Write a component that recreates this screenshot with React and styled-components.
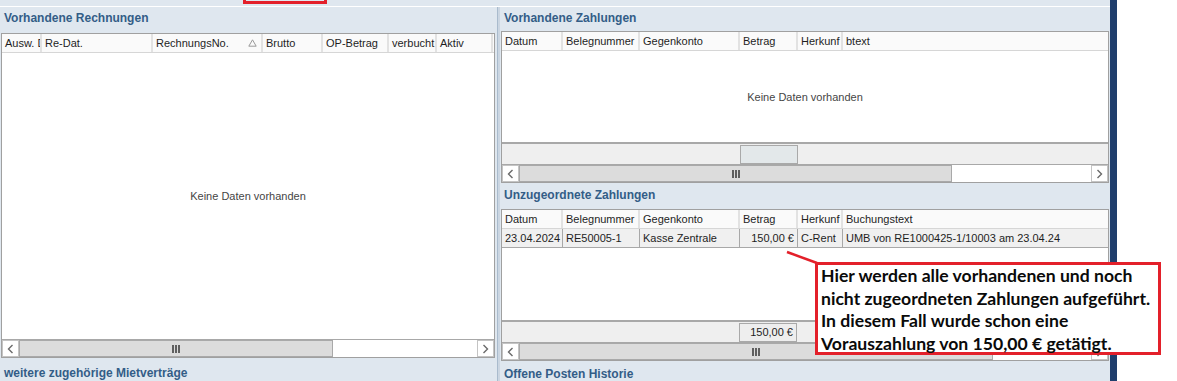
import React from "react";
import styled, { createGlobalStyle } from "styled-components";

const GlobalStyle = createGlobalStyle`
  *, *::before, *::after { box-sizing: border-box; }
  html, body { margin: 0; padding: 0; background: #ffffff; }
`;

const Root = styled.div`
  position: relative;
  width: 1177px;
  height: 381px;
  display: flex;
  overflow: hidden;
  font-family: "Liberation Sans", Arial, sans-serif;
  font-size: 11px;
  color: #1e1e1e;
`;

const Main = styled.div`
  width: 1110px;
  display: flex;
  flex-direction: column;
  background: #dfe7ef;
`;

const DarkBar = styled.div`
  width: 7px;
  background: #1f3e6c;
`;

const Rest = styled.div`
  flex: 1;
  background: #ffffff;
`;

const TopStrip = styled.div`
  height: 7px;
  border-bottom: 1px solid #ffffff;
  flex-shrink: 0;
`;

const Panels = styled.div`
  flex: 1;
  display: flex;
  min-height: 0;
`;

const Panel = styled.div`
  width: ${(p) => p.$w}px;
  display: flex;
  flex-direction: column;
  flex-shrink: 0;
`;

const Splitter = styled.div`
  width: 3px;
  flex-shrink: 0;
  background: linear-gradient(to right, #a9bbcd 0 1px, #cbd6e2 1px 3px);
`;

const PanelTitle = styled.div`
  height: ${(p) => p.$h}px;
  padding: ${(p) => p.$pt}px 0 0 4px;
  font-weight: bold;
  font-size: 12px;
  line-height: 16px;
  color: #335d87;
  white-space: nowrap;
  flex-shrink: 0;
`;

const Grid = styled.div`
  margin-left: 1px;
  width: ${(p) => p.$w}px;
  height: ${(p) => p.$h}px;
  border: 1px solid #a0a0a0;
  background: #ffffff;
  display: flex;
  flex-direction: column;
  flex-shrink: 0;
  overflow: hidden;
`;

const HeaderRow = styled.div`
  display: flex;
  height: 19px;
  flex-shrink: 0;
  background: #fafafa;
  border-bottom: 1px solid #d6d6d6;
`;

const HeaderCell = styled.div`
  width: ${(p) => p.$w}px;
  flex-shrink: 0;
  display: flex;
  align-items: center;
  justify-content: space-between;
  padding: 0 ${(p) => (p.$tight ? 0 : 4)}px 0 3px;
  border-right: ${(p) => (p.$last ? "none" : "2px solid #e2e2e2")};
  line-height: 18px;
  white-space: nowrap;
  overflow: hidden;
  color: #1e1e1e;
  ${(p) => (p.$last ? "flex: 1;" : "")}
`;

const DataRow = styled.div`
  display: flex;
  height: 19px;
  flex-shrink: 0;
  background: #f0f0f0;
  border-bottom: 1px solid #a8a8a8;
`;

const DataCell = styled.div`
  width: ${(p) => p.$w}px;
  flex-shrink: 0;
  padding: 0 3px;
  line-height: 18px;
  white-space: nowrap;
  overflow: hidden;
  text-align: ${(p) => (p.$right ? "right" : "left")};
  border-right: ${(p) => (p.$last ? "none" : "1px solid #a8a8a8")};
  ${(p) => (p.$last ? "flex: 1;" : "")}
`;

const Body = styled.div`
  flex: 1;
  min-height: 0;
  display: flex;
  align-items: center;
  justify-content: center;
  background: #ffffff;
`;

const Empty = styled.span`
  color: #454545;
`;

const Footer = styled.div`
  height: 22px;
  flex-shrink: 0;
  border-top: 2px solid #a8a8a8;
  background: #efefef;
  display: flex;
  align-items: center;
  padding-left: ${(p) => p.$offset}px;
`;

const FooterBox = styled.div`
  width: 58px;
  height: 19px;
  border: 1px solid #a9a9a9;
  background: ${(p) => (p.$filled ? "#eeeeee" : "#e3e8ea")};
  text-align: right;
  padding-right: 3px;
  line-height: 17px;
  white-space: nowrap;
`;

const ScrollBar = styled.div`
  height: 18px;
  flex-shrink: 0;
  display: flex;
  border-top: 1px solid #a8a8a8;
  background: #ffffff;
`;

const ArrowBtn = styled.div`
  width: 17px;
  flex-shrink: 0;
  display: flex;
  align-items: center;
  justify-content: center;
  border: 1px solid #c4c4c4;
  background: #ffffff;
`;

const Thumb = styled.div`
  width: ${(p) => p.$w}px;
  flex-shrink: 0;
  background: #dcdcdc;
  border: 1px solid #a9a9a9;
  display: flex;
  align-items: center;
  justify-content: center;
`;

const Track = styled.div`
  flex: 1;
  background: #ffffff;
`;

const RedFrame = styled.div`
  position: absolute;
  left: 243px;
  top: -20px;
  width: 84px;
  height: 24px;
  border: 3px solid #e3202a;
`;

const Callout = styled.div`
  position: absolute;
  left: 815px;
  top: 262px;
  width: 346px;
  height: 93px;
  border: 3px solid #e3202a;
  background: #ffffff;
  padding: 0 0 0 3px;
  font-family: Lato, "Open Sans", sans-serif;
  font-weight: 700;
  font-size: 17.6px;
  color: #0a0a0a;
`;

const CalloutLine = styled.div`
  line-height: 22.5px;
  white-space: nowrap;
`;

const Connector = styled.svg`
  position: absolute;
  left: 784px;
  top: 248px;
  overflow: visible;
`;

const Chevron = ({ dir }) => (
  <svg width="7" height="10" viewBox="0 0 7 10">
    <polyline
      points={dir === "left" ? "5.5,1 1.5,5 5.5,9" : "1.5,1 5.5,5 1.5,9"}
      fill="none"
      stroke="#6a6a6a"
      strokeWidth="1.4"
    />
  </svg>
);

const Grip = () => (
  <svg width="8" height="8" viewBox="0 0 8 8">
    <rect x="0" y="0" width="2" height="8" fill="#5f5f5f" />
    <rect x="3" y="0" width="2" height="8" fill="#5f5f5f" />
    <rect x="6" y="0" width="2" height="8" fill="#5f5f5f" />
  </svg>
);

const SortMark = () => (
  <svg width="9" height="8" viewBox="0 0 9 8">
    <polygon points="4.5,0.8 8.2,7.2 0.8,7.2" fill="none" stroke="#9a9a9a" strokeWidth="1" />
  </svg>
);

const Scroll = ({ thumb }) => (
  <ScrollBar>
    <ArrowBtn>
      <Chevron dir="left" />
    </ArrowBtn>
    <Thumb $w={thumb}>
      <Grip />
    </Thumb>
    <Track />
    <ArrowBtn>
      <Chevron dir="right" />
    </ArrowBtn>
  </ScrollBar>
);

const leftCols = [
  { label: "Ausw. D", w: 40, tight: true },
  { label: "Re-Dat.", w: 111 },
  { label: "RechnungsNo.", w: 110, sort: true },
  { label: "Brutto", w: 60 },
  { label: "OP-Betrag", w: 66 },
  { label: "verbucht", w: 48, tight: true },
  { label: "Aktiv", w: 56 },
];

const payCols = [
  { label: "Datum", w: 61 },
  { label: "Belegnummer", w: 77 },
  { label: "Gegenkonto", w: 100 },
  { label: "Betrag", w: 58 },
  { label: "Herkunf", w: 45, tight: true },
];

const Header = ({ cols, lastLabel }) => (
  <HeaderRow>
    {cols.map((c) => (
      <HeaderCell key={c.label} $w={c.w} $tight={c.tight}>
        <span>{c.label}</span>
        {c.sort && <SortMark />}
      </HeaderCell>
    ))}
    {lastLabel && (
      <HeaderCell $last>
        <span>{lastLabel}</span>
      </HeaderCell>
    )}
  </HeaderRow>
);

export default function App() {
  return (
    <>
      <GlobalStyle />
      <Root>
        <Main>
          <TopStrip />
          <Panels>
            <Panel $w={497}>
              <PanelTitle $h={26} $pt={3}>Vorhandene Rechnungen</PanelTitle>
              <Grid $w={494} $h={325}>
                <Header cols={leftCols} />
                <Body>
                  <Empty>Keine Daten vorhanden</Empty>
                </Body>
                <Scroll thumb={314} />
              </Grid>
              <PanelTitle $h={23} $pt={7}>weitere zugehörige Mietverträge</PanelTitle>
            </Panel>
            <Splitter />
            <Panel $w={610}>
              <PanelTitle $h={24} $pt={3}>Vorhandene Zahlungen</PanelTitle>
              <Grid $w={608} $h={152}>
                <Header cols={payCols} lastLabel="btext" />
                <Body>
                  <Empty>Keine Daten vorhanden</Empty>
                </Body>
                <Footer $offset={238}>
                  <FooterBox />
                </Footer>
                <Scroll thumb={433} />
              </Grid>
              <PanelTitle $h={26} $pt={4}>Unzugeordnete Zahlungen</PanelTitle>
              <Grid $w={608} $h={152}>
                <Header cols={payCols} lastLabel="Buchungstext" />
                <DataRow>
                  <DataCell $w={61}>23.04.2024</DataCell>
                  <DataCell $w={77}>RE50005-1</DataCell>
                  <DataCell $w={100}>Kasse Zentrale</DataCell>
                  <DataCell $w={58} $right>150,00 €</DataCell>
                  <DataCell $w={45}>C-Rent</DataCell>
                  <DataCell $last>UMB von RE1000425-1/10003 am 23.04.24</DataCell>
                </DataRow>
                <Body />
                <Footer $offset={237}>
                  <FooterBox $filled>150,00 €</FooterBox>
                </Footer>
                <Scroll thumb={474} />
              </Grid>
              <PanelTitle $h={21} $pt={5}>Offene Posten Historie</PanelTitle>
            </Panel>
          </Panels>
        </Main>
        <DarkBar />
        <Rest />

        <RedFrame />
        <Connector width="34" height="16">
          <line x1="3" y1="4" x2="33" y2="15" stroke="#e3202a" strokeWidth="2.5" />
        </Connector>
        <Callout>
          <CalloutLine>Hier werden alle vorhandenen und noch</CalloutLine>
          <CalloutLine>nicht zugeordneten Zahlungen aufgeführt.</CalloutLine>
          <CalloutLine>In diesem Fall wurde schon eine</CalloutLine>
          <CalloutLine>Vorauszahlung von 150,00 € getätigt.</CalloutLine>
        </Callout>
      </Root>
    </>
  );
}
